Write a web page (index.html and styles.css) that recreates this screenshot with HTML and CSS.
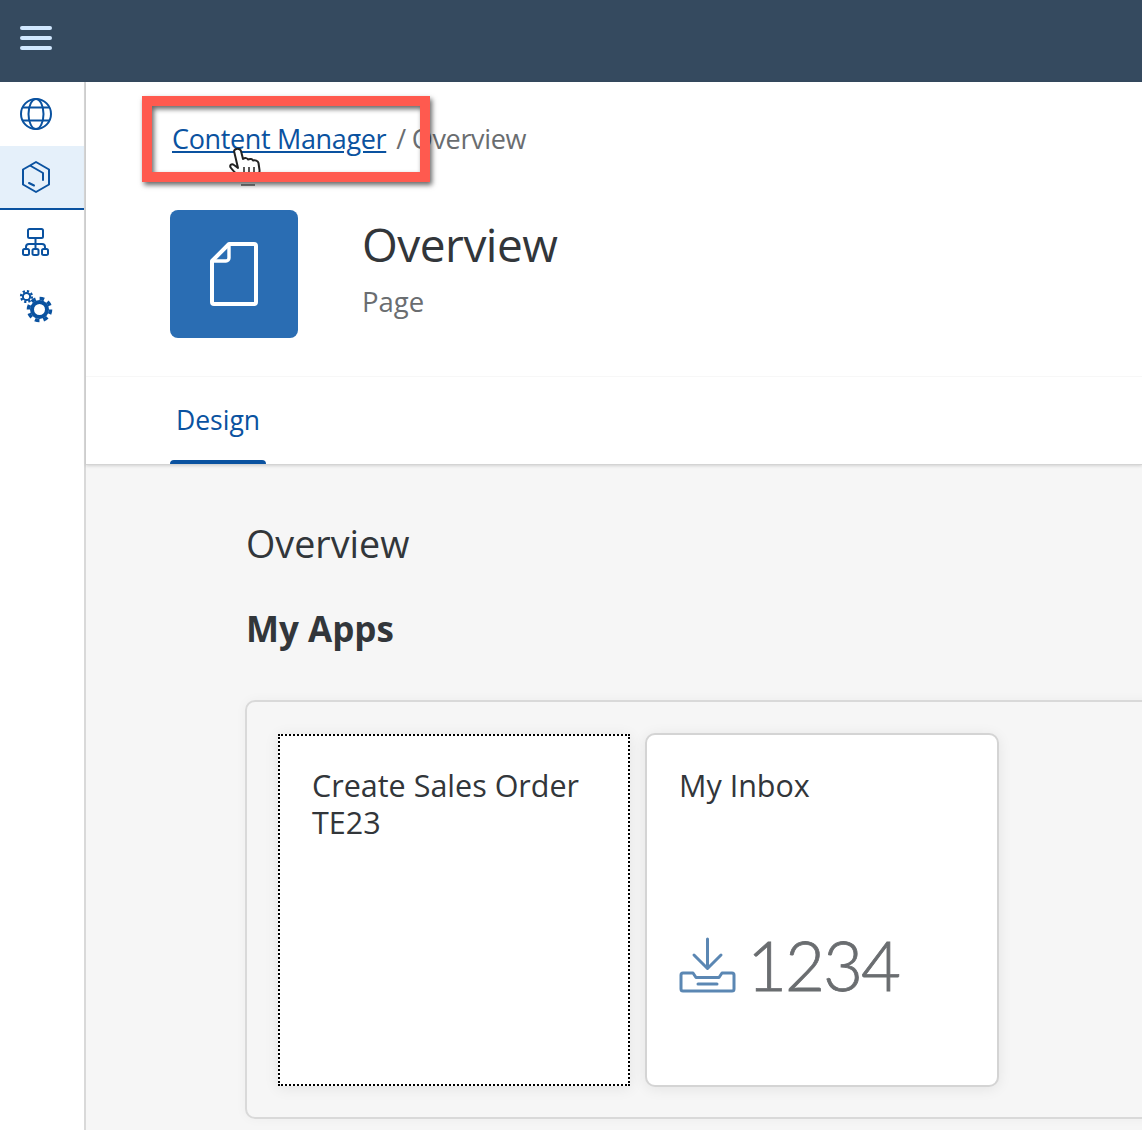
FILE: index.html
```html
<!DOCTYPE html>
<html lang="en">
<head>
  <meta charset="UTF-8" />
  <title>Overview</title>
  <link rel="stylesheet" href="styles.css">
</head>
<body>
  <div class="shell-bar">
    <button class="menu-btn" title="Menu">
      <span></span><span></span><span></span>
    </button>
  </div>

  <div class="layout">
    <div class="side-nav">
      <div class="nav-item">
        <svg width="34" height="34" viewBox="0 0 34 34" fill="none" stroke="#0a52a0" stroke-width="2">
          <circle cx="17" cy="17" r="15"/>
          <ellipse cx="17" cy="17" rx="7.500" ry="15"/>
          <path d="M4 10.500h26M4 23.500h26"/>
        </svg>
      </div>
      <div class="nav-item active">
        <svg width="30" height="34" viewBox="0 0 30 34" fill="none" stroke="#0a52a0" stroke-width="2" stroke-linejoin="round" stroke-linecap="round">
          <path d="M9 5.500 2 9.500v15l13 7.500 13-7.500v-15L15 2 9 5.500l13 7.500v7"/>
          <path d="M8 23l5 2.500"/>
        </svg>
      </div>
      <div class="nav-item">
        <svg width="30" height="30" viewBox="0 0 30 30" fill="none" stroke="#0a52a0" stroke-width="2">
          <rect x="7" y="2" width="15" height="9" rx="1.500"/>
          <path d="M14.500 11v11M5 22v-2a3 3 0 0 1 3-3h13a3 3 0 0 1 3 3v2"/>
          <rect x="2" y="22" width="6" height="6" rx="1.500"/>
          <rect x="11.500" y="22" width="6" height="6" rx="1.500"/>
          <rect x="21" y="22" width="6" height="6" rx="1.500"/>
        </svg>
      </div>
      <div class="nav-item">
        <svg width="34" height="34" viewBox="0 0 34 34" fill="none" stroke="#0a52a0">
          <circle cx="7.500" cy="7.500" r="3.600" stroke-width="2"/>
          <circle cx="7.500" cy="7.500" r="5.400" stroke-width="2.400" stroke-dasharray="2.200 2"/>
          <circle cx="20.500" cy="20.500" r="7.500" stroke-width="4"/>
          <circle cx="20.500" cy="20.500" r="11" stroke-width="3.600" stroke-dasharray="4.600 4"/>
        </svg>
      </div>
    </div>

    <div class="main">
      <div class="page-head">
        <div class="breadcrumb">
          <a href="#">Content Manager</a><span class="crumb-sep">/</span><span>Overview</span>
        </div>
        <div class="title-row">
          <div class="page-icon">
            <svg width="48" height="64" viewBox="0 0 48 64" fill="none" stroke="#fff" stroke-width="4" stroke-linejoin="round">
              <path d="M19 2h25a2 2 0 0 1 2 2v56a2 2 0 0 1-2 2H4a2 2 0 0 1-2-2V19z"/>
              <path d="M19 2v14a3 3 0 0 1-3 3H2" stroke-width="3.400"/>
            </svg>
          </div>
          <div class="title-text">
            <h1>Overview</h1>
            <div class="subtitle">Page</div>
          </div>
        </div>
        <div class="tabs">
          <div class="tab">Design</div>
        </div>
      </div>

      <div class="content">
        <h2>Overview</h2>
        <h3>My Apps</h3>
        <div class="tile-panel">
          <div class="tile focused">
            <div class="tile-title">Create Sales Order TE23</div>
          </div>
          <div class="tile">
            <div class="tile-title">My Inbox</div>
            <div class="tile-value">
              <svg width="58" height="58" viewBox="0 0 58 58" fill="none" stroke="#5b87b3" stroke-width="3" stroke-linecap="round" stroke-linejoin="round">
                <path d="M28.500 2v29M15 18l13.500 13.500L42 18"/>
                <path d="M14 36H4a2 2 0 0 0-2 2v14a2 2 0 0 0 2 2h49a2 2 0 0 0 2-2V38a2 2 0 0 0-2-2H43l-3 4.500H17z"/>
                <path d="M19 47h19"/>
              </svg>
              <span class="count">1234</span>
            </div>
          </div>
        </div>
      </div>
    </div>
  </div>

  <!-- screenshot annotation -->
  <svg class="hand-cursor" width="34" height="42" viewBox="0 0 34 42">
    <path d="M6 4c1-3 6-3 7 0l2 8c2-1.500 4.500-1 5 .5 2-1 4.500-.5 5 1 2-.5 5 0 5.500 2.500l1 7c.3 3-1 6-3 8H12c-2-3-6-6-9-10-2-2.500.5-5 3-3l4 3z" fill="#fff" stroke="#222" stroke-width="2" stroke-linejoin="round"/>
    <path d="M16 20v8M21 20v8M26 20v8" stroke="#222" stroke-width="1.500"/>
    <rect x="13" y="37" width="14" height="2" fill="#888"/>
  </svg>
  <div class="callout"></div>
</body>
</html>
```

FILE: styles.css
```css
body {
  margin: 0;
  height: 1130px;
  overflow: hidden;
  font-family: "Open Sans", Arial, sans-serif;
  background-color: #fff;
  color: #32363a;
  position: relative;
}

.shell-bar {
  height: 82px;
  background-color: #354a5f;
  display: flex;
  align-items: center;
}

.menu-btn {
  background: none;
  border: none;
  margin: 0 0 6px 20px;
  padding: 0;
  width: 32px;
  display: flex;
  flex-direction: column;
  gap: 6px;
}

.menu-btn span {
  display: block;
  height: 4px;
  border-radius: 2px;
  background-color: #d1e8ff;
}

.layout {
  display: flex;
  height: 1048px;
}

.side-nav {
  width: 84px;
  flex-shrink: 0;
  border-right: 2px solid #d9d9d9;
}

.nav-item {
  height: 64px;
  padding-right: 12px;
  display: flex;
  align-items: center;
  justify-content: center;
  box-sizing: border-box;
}

.nav-item.active {
  background-color: #e5f0fa;
  border-bottom: 2px solid #0a52a0;
}

.main {
  flex: 1;
  min-width: 0;
  display: flex;
  flex-direction: column;
}

.page-head {
  height: 383px;
  box-sizing: border-box;
  border-bottom: 1px solid #d4d4d4;
  box-shadow: 0 1px 3px rgba(0, 0, 0, 0.15);
  display: flex;
  flex-direction: column;
  position: relative;
}

.breadcrumb {
  margin: 39px 0 0 86px;
  font-size: 27px;
  line-height: 36px;
  color: #6a6d70;
  letter-spacing: -0.35px;
}

.breadcrumb a {
  color: #0a52a0;
}

.crumb-sep {
  margin: 0 6px 0 10px;
}

.title-row {
  display: flex;
  margin: 53px 0 0 84px;
  gap: 64px;
}

.page-icon {
  width: 128px;
  height: 128px;
  border-radius: 8px;
  background-color: #2a6db3;
  display: flex;
  align-items: center;
  justify-content: center;
}

.title-text h1 {
  margin: 5px 0 0;
  font-size: 46px;
  line-height: 58px;
  font-weight: 400;
  letter-spacing: -0.5px;
}

.subtitle {
  margin-top: 11px;
  font-size: 27.500px;
  line-height: 36px;
  color: #6a6d70;
}

.tabs {
  margin-top: 38px;
  padding-left: 84px;
  border-top: 1px solid #f7f7f7;
  flex: 1;
}

.tab {
  width: 96px;
  height: 87px;
  box-sizing: border-box;
  padding: 25px 0 0 6px;
  font-size: 26.500px;
  line-height: 36px;
  color: #0a52a0;
  position: relative;
}

.tab::after {
  content: "";
  position: absolute;
  left: 0;
  right: 0;
  bottom: 0;
  height: 4px;
  border-radius: 4px 4px 0 0;
  background-color: #0a52a0;
}

.content {
  flex: 1;
  background-color: #f6f6f6;
  padding: 55px 0 0 160px;
  min-height: 0;
}

.content h2 {
  margin: 0;
  font-size: 37.700px;
  line-height: 48px;
  font-weight: 400;
}

.content h3 {
  margin: 37px 0 0;
  font-size: 35px;
  line-height: 48px;
  font-weight: 700;
}

.tile-panel {
  margin: 47px -40px 0 -1px;
  height: 419px;
  box-sizing: border-box;
  border: 2px solid #d9d9d9;
  border-radius: 10px;
  padding: 31px;
  display: flex;
  align-items: flex-start;
  gap: 15px;
  box-shadow: 0 0 12px rgba(0, 0, 0, 0.04);
}

.tile {
  width: 354px;
  height: 354px;
  box-sizing: border-box;
  background-color: #fff;
  border: 2px solid #d4d4d4;
  border-radius: 10px;
  box-shadow: 0 2px 14px rgba(0, 0, 0, 0.08);
  padding: 32px 32px;
  display: flex;
  flex-direction: column;
  justify-content: space-between;
}

.tile.focused {
  width: 352px;
  height: 352px;
  margin-top: 1px;
  padding-top: 31px;
  border: 2px dotted #000;
  border-radius: 0;
}

.tile-title {
  font-size: 30.500px;
  line-height: 37px;
  color: #32363a;
}

.tile-value {
  display: flex;
  align-items: flex-start;
  height: 78px;
  margin: 0 0 48px 0;
  padding-top: 10px;
  box-sizing: border-box;
  gap: 10px;
}

.count {
  font-family: Lato, "Open Sans", sans-serif;
  font-size: 69px;
  line-height: 56px;
  font-weight: 300;
  color: #6a6d70;
  -webkit-text-stroke: 0.8px #6a6d70;
  letter-spacing: -2px;
}

.callout {
  position: absolute;
  left: 142px;
  top: 96px;
  width: 288px;
  height: 86px;
  box-sizing: border-box;
  border: 10px solid #ff5a4f;
  box-shadow: 2px 3px 5px rgba(0, 0, 0, 0.6), inset 2px 3px 5px rgba(0, 0, 0, 0.6);
}

.hand-cursor {
  position: absolute;
  left: 228px;
  top: 147px;
}
```
